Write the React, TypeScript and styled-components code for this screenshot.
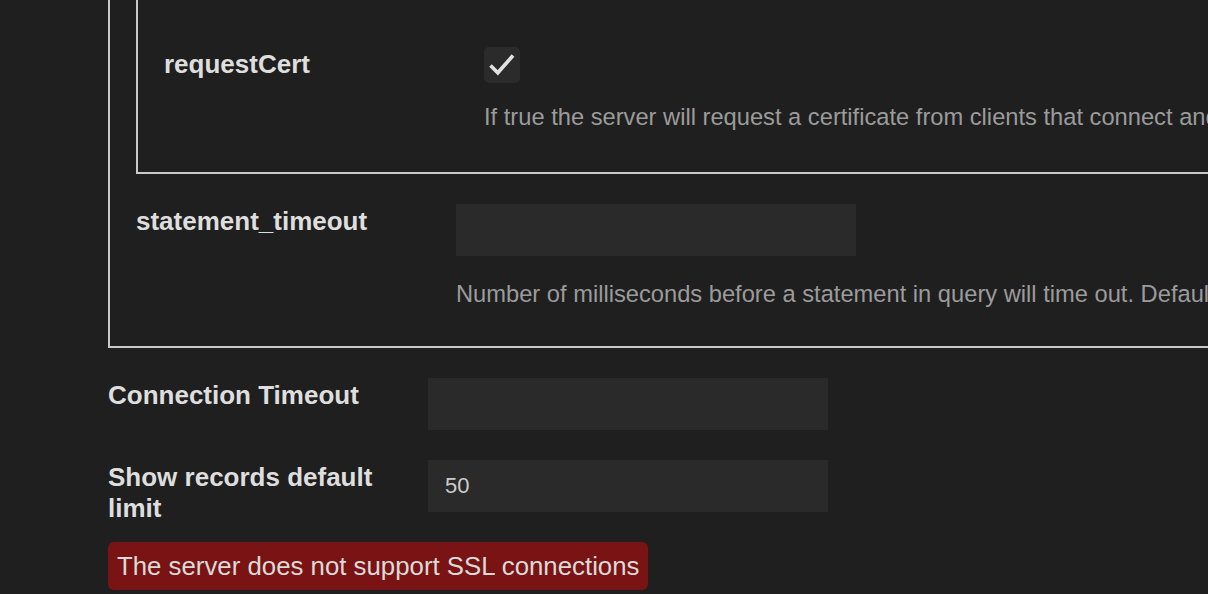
import React from "react";
import styled, { createGlobalStyle } from "styled-components";

const GlobalStyle = createGlobalStyle`
  html, body {
    margin: 0;
    padding: 0;
    background: #1f1f1f;
    overflow: hidden;
  }
  body {
    font-family: "Liberation Sans", Arial, sans-serif;
  }
`;

const Page = styled.div`
  width: 1208px;
  height: 594px;
  overflow: hidden;
  background: #1f1f1f;
  padding-left: 108px;
  box-sizing: border-box;
`;

const Form = styled.div`
  display: flex;
  flex-direction: column;
  gap: 18px;
  margin-top: -40px;
`;

const Box = styled.div<{ $width?: string; $padTop: number; $padBottom: number }>`
  display: flex;
  flex-direction: column;
  gap: 18px;
  box-sizing: border-box;
  width: ${(p) => p.$width ?? "auto"};
  border: 2px solid #c9c9c9;
  padding: ${(p) => p.$padTop}px 0 ${(p) => p.$padBottom}px 26px;
  margin-bottom: 12px;
`;

const Row = styled.div`
  display: grid;
  grid-template-columns: 300px 1fr;
  column-gap: 20px;
  align-items: start;
`;

const Label = styled.div`
  padding-top: 2px;
  font-size: 26px;
  line-height: 31px;
  font-weight: 700;
  color: #dedede;
`;

const Control = styled.div`
  display: flex;
  flex-direction: column;
  align-items: flex-start;
  padding-bottom: 12px;
  min-width: 0;
`;

const TextInput = styled.input`
  width: 400px;
  height: 52px;
  box-sizing: border-box;
  border: none;
  outline: none;
  background: #2a2a2a;
  color: #cccccc;
  font-family: "Liberation Sans", Arial, sans-serif;
  font-size: 22px;
  padding: 0 17px;
  margin: 0;
`;

const CheckBox = styled.div`
  width: 36px;
  height: 36px;
  border-radius: 5px;
  background: #2b2b2b;
  display: flex;
  align-items: center;
  justify-content: center;
`;

const Description = styled.div<{ $gap: number }>`
  margin-top: ${(p) => p.$gap}px;
  font-size: 23.7px;
  line-height: 29px;
  color: #9b9b9b;
  white-space: nowrap;
`;

const ErrorBanner = styled.div`
  align-self: flex-start;
  background: #7a1313;
  color: #dadada;
  font-size: 25.8px;
  line-height: 48px;
  padding: 0 9px;
  border-radius: 6px;
  white-space: nowrap;
`;

const Check = () => (
  <svg width="36" height="36" viewBox="0 0 36 36">
    <path
      d="M6.5 18.5 L13.8 25.8 L29 8.5"
      fill="none"
      stroke="#e2e2e2"
      strokeWidth="3.6"
      strokeLinecap="butt"
      strokeLinejoin="miter"
    />
  </svg>
);

export default function App() {
  return (
    <>
      <GlobalStyle />
      <Page>
        <Form>
          <Box $width="1200px" $padTop={10} $padBottom={25}>
            <Box $padTop={73} $padBottom={28}>
              <Row>
                <Label>requestCert</Label>
                <Control>
                  <CheckBox>
                    <Check />
                  </CheckBox>
                  <Description $gap={20}>
                    If true the server will request a certificate from clients that connect and attempt to verify that certificate.
                  </Description>
                </Control>
              </Row>
            </Box>
            <Row>
              <Label>statement_timeout</Label>
              <Control>
                <TextInput type="text" defaultValue="" />
                <Description $gap={24}>
                  Number of milliseconds before a statement in query will time out. Default is no timeout.
                </Description>
              </Control>
            </Row>
          </Box>
          <Row>
            <Label>Connection Timeout</Label>
            <Control>
              <TextInput type="text" defaultValue="" />
            </Control>
          </Row>
          <Row>
            <Label>Show records default limit</Label>
            <Control>
              <TextInput type="text" defaultValue="50" />
            </Control>
          </Row>
          <ErrorBanner>The server does not support SSL connections</ErrorBanner>
        </Form>
      </Page>
    </>
  );
}
